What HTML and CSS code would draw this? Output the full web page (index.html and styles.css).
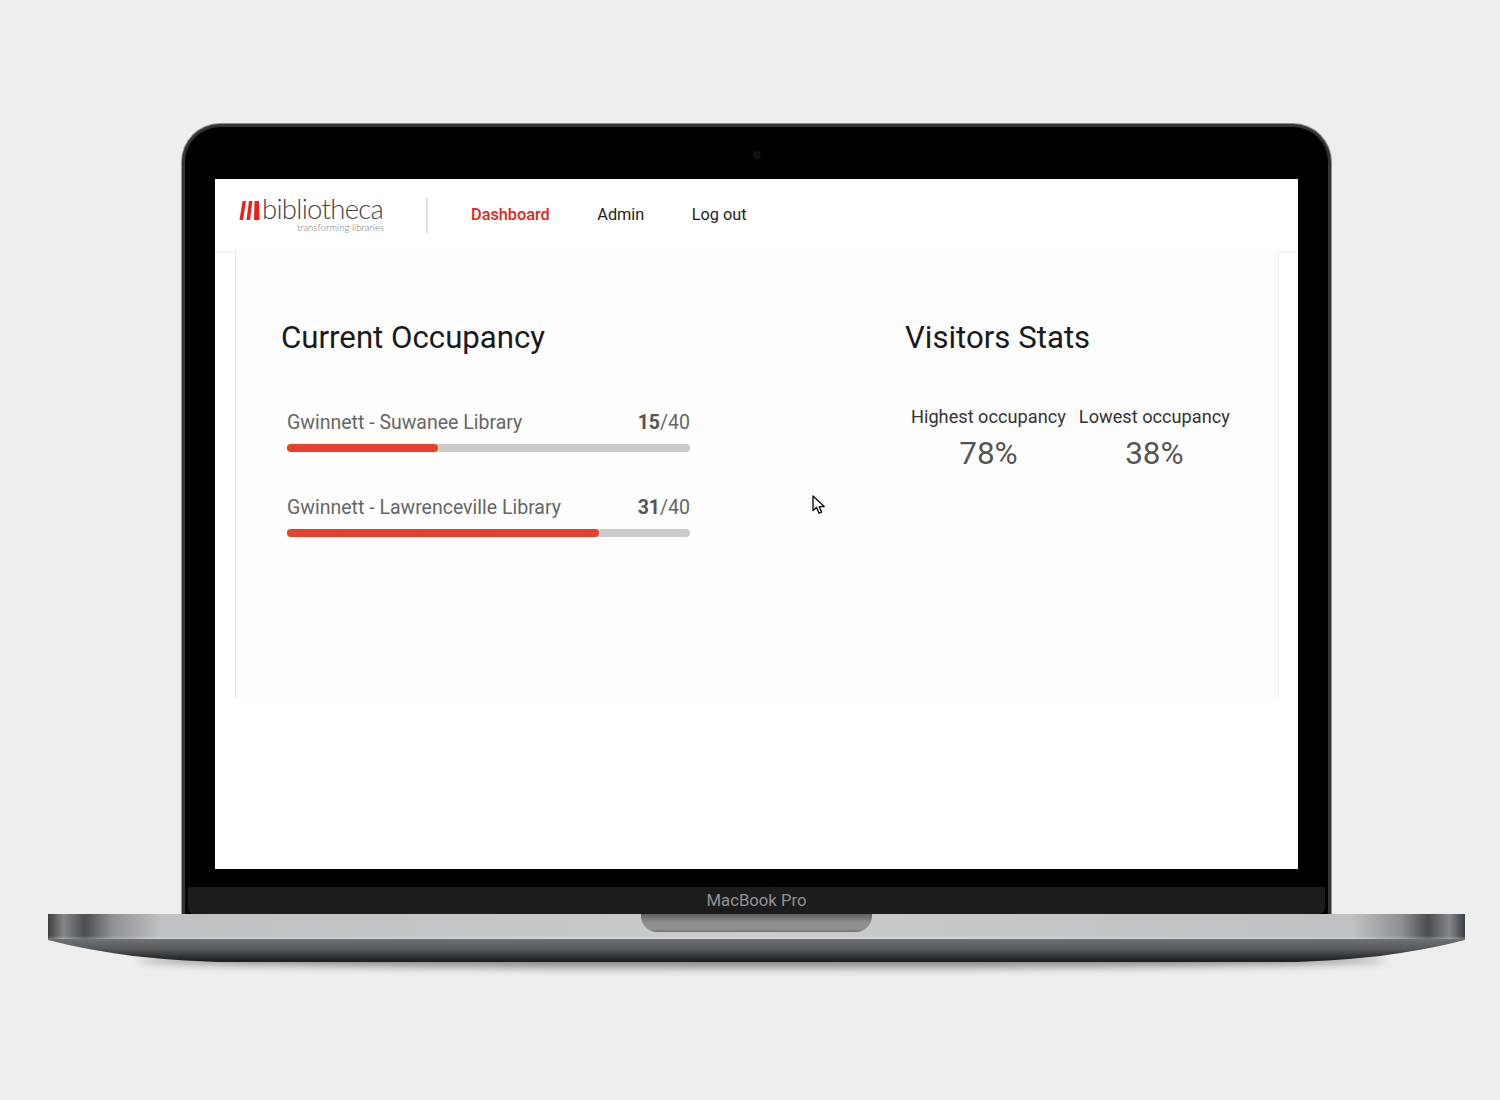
FILE: index.html
```html
<!DOCTYPE html>
<html lang="en">
<head>
    <meta charset="UTF-8">
    <title>Dashboard</title>
    <link rel="stylesheet" href="styles.css">
</head>
<body>
    <div class="laptop">
        <div class="lid">
            <div class="camera"></div>
            <div class="screen">
                <header class="topbar">
                    <div class="logo">
                        <svg class="logo-mark" width="21" height="19" viewBox="0 0 21 19">
                            <path d="M3.5 0H7L4 19H0.5Z M10 0H13.5L11 19H7.5Z M15.5 0H20L20.5 19H15Z" fill="#e8231a"/>
                        </svg>
                        <div class="logo-text">
                            <div class="logo-name">bibliotheca</div>
                            <div class="logo-tag">transforming libraries</div>
                        </div>
                    </div>
                    <nav class="nav">
                        <a class="nav-link active">Dashboard</a>
                        <a class="nav-link">Admin</a>
                        <a class="nav-link">Log out</a>
                    </nav>
                </header>

                <main class="panel">
                    <section class="occupancy">
                        <h2>Current Occupancy</h2>
                        <div class="library">
                            <div class="library-row">
                                <span>Gwinnett - Suwanee Library</span>
                                <span class="count"><b>15</b>/40</span>
                            </div>
                            <div class="bar"><div class="bar-fill" style="width: 37.5%"></div></div>
                        </div>
                        <div class="library">
                            <div class="library-row">
                                <span>Gwinnett - Lawrenceville Library</span>
                                <span class="count"><b>31</b>/40</span>
                            </div>
                            <div class="bar"><div class="bar-fill" style="width: 77.5%"></div></div>
                        </div>
                    </section>
                    <section class="visitors">
                        <h2>Visitors Stats</h2>
                        <div class="stats">
                            <div class="stat">
                                <div class="stat-label">Highest occupancy</div>
                                <div class="stat-value">78%</div>
                            </div>
                            <div class="stat">
                                <div class="stat-label">Lowest occupancy</div>
                                <div class="stat-value">38%</div>
                            </div>
                        </div>
                    </section>
                    <svg class="cursor" width="14" height="20" viewBox="0 0 14 20">
                        <path d="M1 1V15.5L4.6 12.4L7 18.2L9.6 17L7.2 11.6H12.2Z" fill="#fff" stroke="#111" stroke-width="1.4" stroke-linejoin="round"/>
                    </svg>
                </main>
            </div>
            <div class="chin-black"></div>
            <div class="chin">MacBook Pro</div>
        </div>
        <div class="base">
            <div class="base-top"><div class="notch"></div></div>
            <div class="base-bottom"></div>
        </div>
    </div>
</body>
</html>
```

FILE: styles.css
```css
body {
    font-family: Roboto, sans-serif;
    background-color: #eeeeee;
    margin: 0;
    padding: 0;
    height: 1100px;
    overflow: hidden;
}
.laptop {
    padding-top: 124px;
    width: 1417px;
    margin-left: 48px;
}

/* lid */
.lid {
    position: relative;
    box-sizing: border-box;
    width: 1149px;
    height: 790px;
    margin-left: 134px;
    padding: 52px 30px 0;
    background-color: #000;
    border: 3px solid #333335;
    border-bottom: none;
    border-radius: 38px 38px 0 0;
    box-shadow: 0 0 0 1px #8f9092;
}
.camera {
    position: absolute;
    top: 24px;
    left: 568px;
    width: 8px;
    height: 8px;
    border-radius: 50%;
    background-color: #121314;
}
.screen {
    height: 690px;
    background-color: #fff;
}
.chin-black {
    height: 18px;
}
.chin {
    height: 27px;
    margin: 0 -27px;
    background-color: #1c1c1c;
    color: #929292;
    font-size: 16.7px;
    line-height: 28px;
    text-align: center;
    border-radius: 0 0 6px 6px;
}

/* top bar */
.topbar {
    display: flex;
    align-items: center;
    height: 72px;
    padding-left: 24px;
    background-color: #fff;
    box-shadow: 0 1px 4px rgba(0, 0, 0, 0.08);
    position: relative;
}
.logo {
    display: flex;
    align-items: flex-start;
    width: 187px;
    height: 35px;
    border-right: 2px solid #dddddd;
}
.logo-mark {
    margin-top: 3px;
    margin-right: 2px;
}
.logo-text {
    width: 122px;
}
.logo-name {
    font-family: Lato, sans-serif;
    font-weight: 300;
    font-size: 27.5px;
    line-height: 22px;
    color: #444;
    letter-spacing: -0.7px;
}
.logo-tag {
    font-family: Lato, sans-serif;
    font-weight: 300;
    font-size: 9.6px;
    line-height: 10px;
    margin-top: 3px;
    color: #777;
    text-align: right;
    white-space: nowrap;
}
.nav {
    display: flex;
    gap: 47.5px;
    margin-left: 43px;
    margin-top: -2px;
}
.nav-link {
    font-size: 16.3px;
    color: #222;
}
.nav-link.active {
    color: #e8231a;
    font-weight: 500;
}

/* main panel */
.panel {
    position: relative;
    display: flex;
    box-sizing: border-box;
    height: 448px;
    margin: 0 19px 0 20px;
    padding-left: 45px;
    background-color: #fdfdfd;
    border-left: 1px solid #e6e6e6;
    border-right: 1px solid #ececec;
}
h2 {
    margin: 0;
    font-size: 31.2px;
    font-weight: 400;
    line-height: 38px;
    color: #1a1a1a;
}
.occupancy {
    width: 624px;
    padding-top: 68px;
}
.occupancy h2 {
    margin-bottom: 53px;
}
.library {
    width: 403px;
    margin-left: 6px;
}
.library + .library {
    margin-top: 43px;
}
.library-row {
    display: flex;
    justify-content: space-between;
    font-size: 19.5px;
    line-height: 26px;
    color: #666;
}
.count b {
    font-weight: 700;
    color: #555;
}
.bar {
    height: 8px;
    margin-top: 8px;
    border-radius: 4px;
    background-color: #cbcbcb;
}
.bar-fill {
    height: 100%;
    border-radius: 4px;
    background-color: #e8412a;
}
.visitors {
    padding-top: 68px;
}
.stats {
    display: flex;
    gap: 13px;
    margin-top: 47px;
    margin-left: 6px;
}
.stat {
    text-align: center;
}
.stat-label {
    font-size: 18.2px;
    line-height: 26px;
    color: #333;
}
.stat-value {
    font-size: 31.5px;
    line-height: 40px;
    margin-top: 4px;
    color: #555;
}
.cursor {
    position: absolute;
    left: 576px;
    top: 244px;
}

/* base */
.base {
    position: relative;
    width: 1417px;
}
.base::after {
    content: "";
    position: absolute;
    z-index: -1;
    left: 90px;
    right: 80px;
    top: 38px;
    height: 16px;
    border-radius: 50%;
    background-color: rgba(0, 0, 0, 0.42);
    filter: blur(4px);
}
.base-top {
    position: relative;
    height: 25px;
    background: linear-gradient(180deg, rgba(255, 255, 255, 0) 88%, rgba(255, 255, 255, 0.25) 100%),
        linear-gradient(90deg, #3d4043 0, #85888a 1.1%, #4b4e51 2.6%, #8e9194 4.5%, #bfc2c4 8%, #c9cccd 50%, #bfc2c4 92%, #8e9194 95.5%, #4b4e51 97.4%, #85888a 98.9%, #3d4043 100%);
}
.notch {
    position: absolute;
    left: 593px;
    top: 0;
    width: 231px;
    height: 18px;
    border-radius: 0 0 16px 16px;
    background: linear-gradient(180deg, #5e5f61 0, #8c8d8f 45%, #8f9092 85%, #6f7072 100%);
}
.base-bottom {
    height: 23px;
    clip-path: path('M0 0V1C60 16 110 21 170 23H1247C1307 21 1357 16 1417 1V0Z');
    background: linear-gradient(180deg, #6f7275 0, #54585b 45%, #25282b 85%, #1b1d20 100%);
}
```
